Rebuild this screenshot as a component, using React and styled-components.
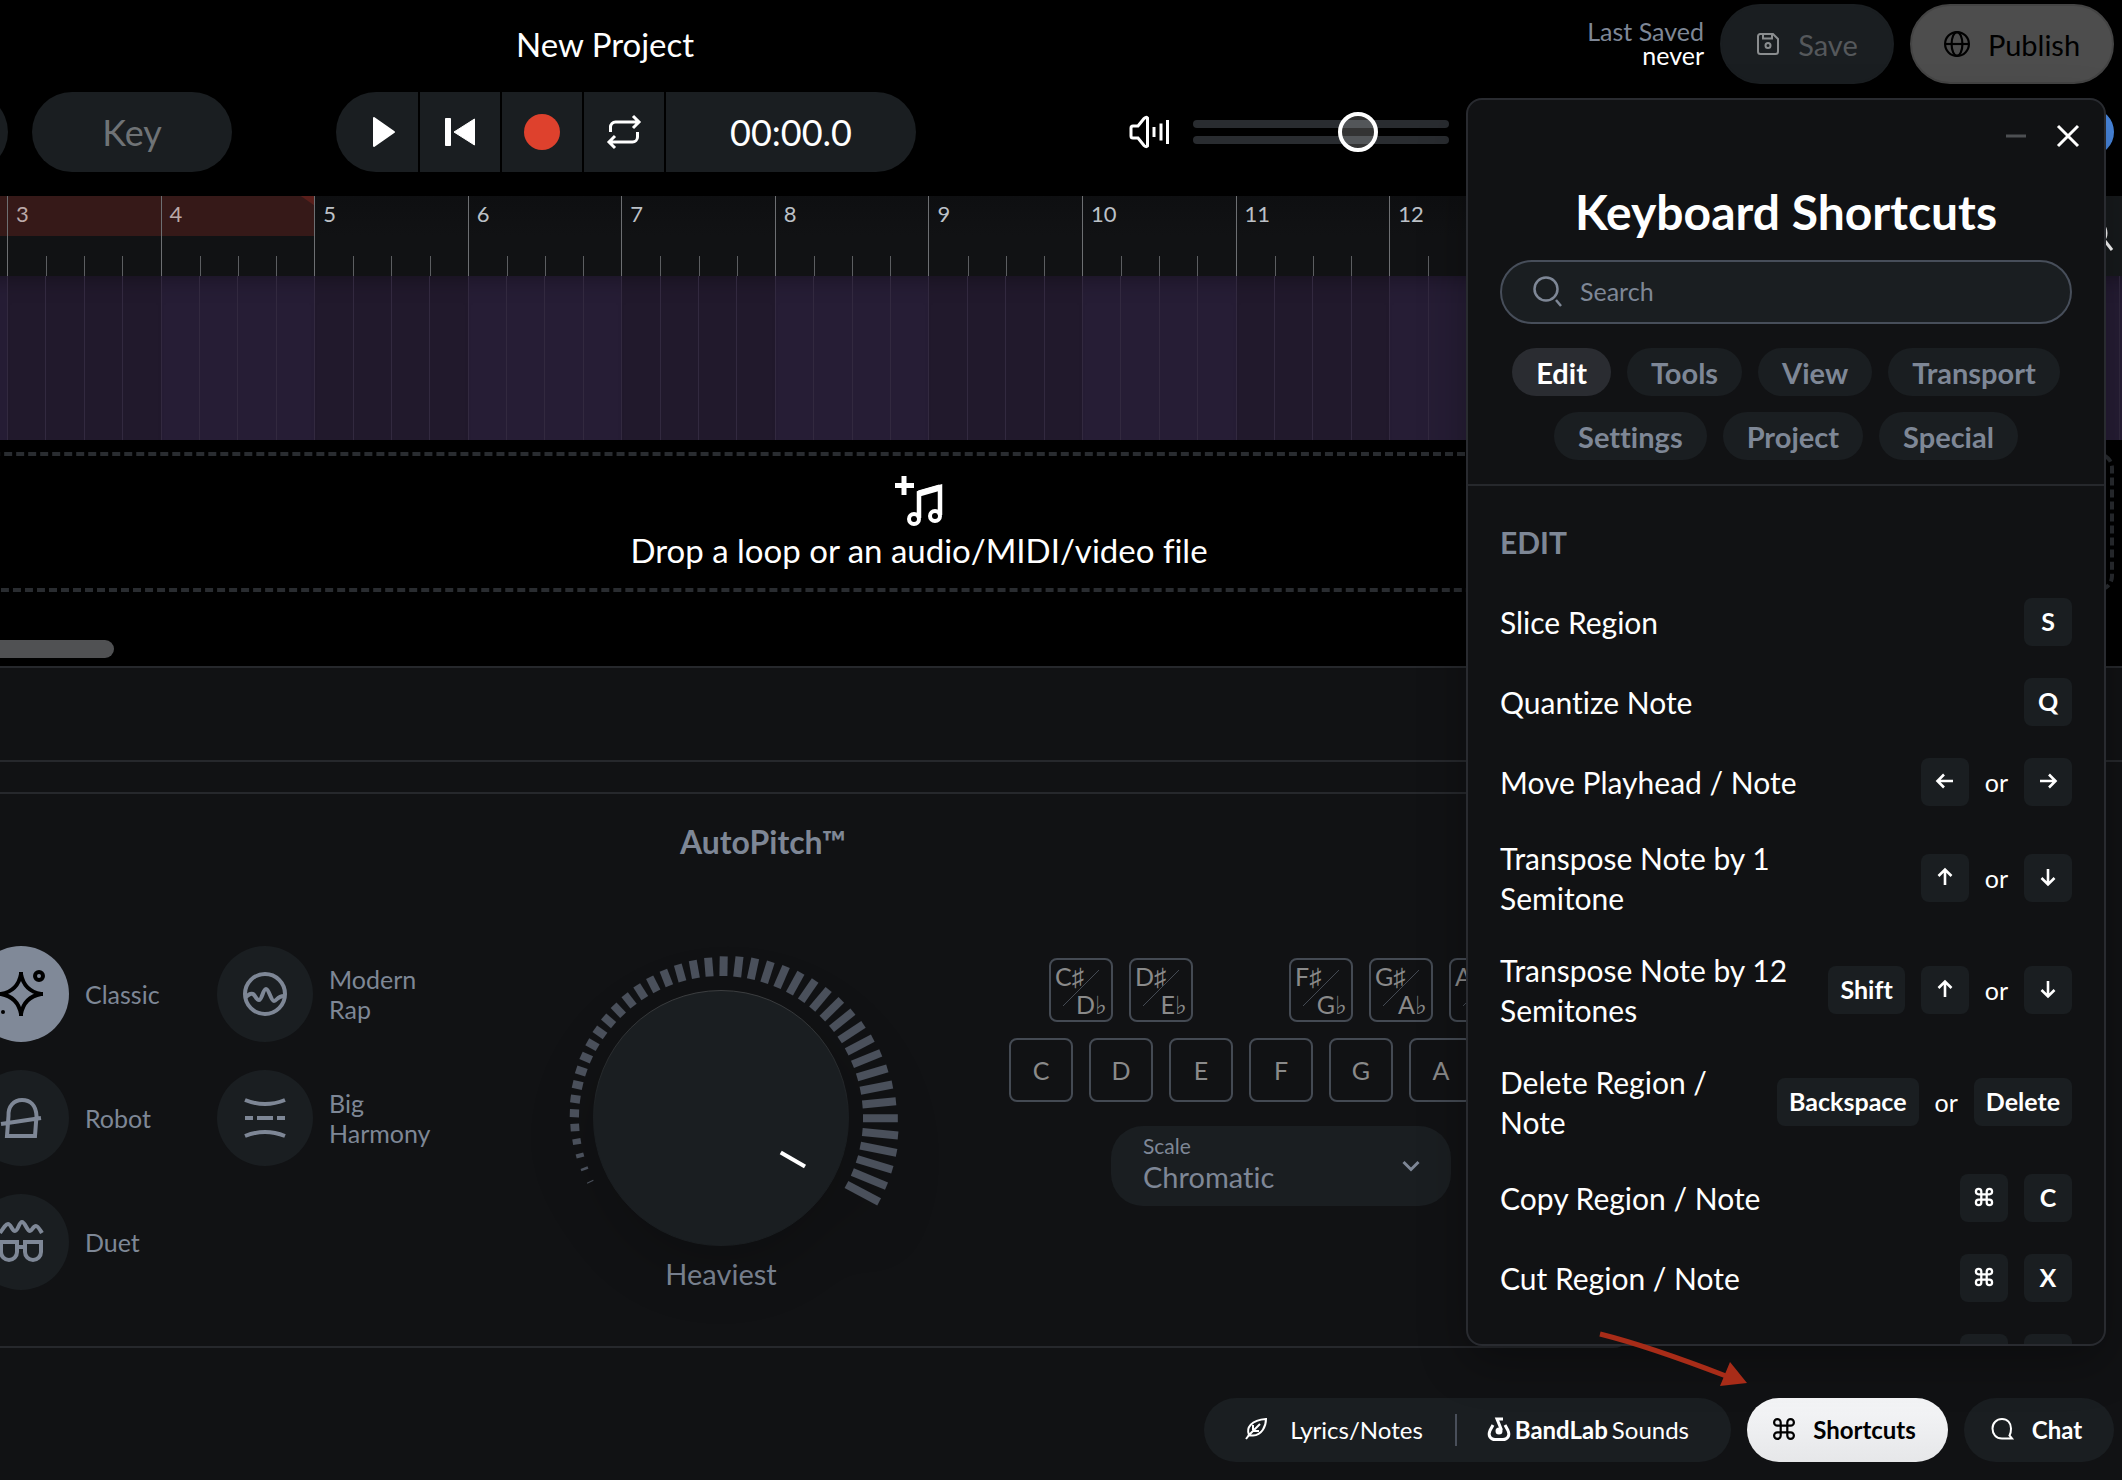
// src/App.jsx
import React, { useState } from 'react';
import styled, { createGlobalStyle } from 'styled-components';

// Global Styles

const GlobalStyle = createGlobalStyle`
  *, *::before, *::after {
    box-sizing: border-box;
  }

  body {
    margin: 0;
    background: #111214;
    color: #fff;
    font-family: Lato, 'Open Sans', sans-serif;
    font-size: 25px;
    font-variant-ligatures: none;
  }

  button, input, select {
    font-family: inherit;
    font-variant-ligatures: none;
    margin: 0;
  }
`;

const Page = styled.div`
  position: relative;
  display: flex;
  flex-direction: column;
  min-height: 100vh;
  overflow: hidden;
`;

// Header

const Header = styled.header`
  display: flex;
  flex-direction: column;
  gap: 8px;
  height: 196px;
  padding: 4px 8px 0 0;
  background: #000;
`;

const HeaderRow = styled.div`
  display: flex;
  align-items: center;
  height: 80px;
`;

const ProjectName = styled.h1`
  margin: 0 auto 0 516px;
  font-size: 33px;
  font-weight: 400;
`;

const SavedInfo = styled.div`
  margin-right: 16px;
  padding-bottom: 2px;
  font-size: 25px;
  line-height: 24px;
  text-align: right;
  color: #7e8796;

  strong {
    display: block;
    font-weight: 400;
    color: #fff;
  }
`;

const HeaderButton = styled.button`
  display: flex;
  align-items: center;
  justify-content: center;
  gap: 18px;
  width: ${({ $primary }) => ($primary ? '204px' : '174px')};
  height: 80px;
  margin-left: ${({ $primary }) => ($primary ? '16px' : '0')};
  border: 2px solid ${({ $primary }) => ($primary ? '#444' : '#1a1e21')};
  border-radius: 40px;
  background: ${({ $primary }) => ($primary ? '#4d4d4d' : '#1a1e21')};
  color: ${({ $primary }) => ($primary ? '#000' : '#55585b')};
  font-size: 29px;
`;

const TempoPill = styled.div`
  width: 80px;
  height: 80px;
  margin: 0 24px 0 -72px;
  border-radius: 40px;
  background: #1a1e21;
`;

const KeyButton = styled.button`
  width: 200px;
  height: 80px;
  margin-right: 104px;
  border: 0;
  border-radius: 40px;
  background: #1a1e21;
  color: #6f7376;
  font-size: 36px;
`;

const Transport = styled.div`
  display: flex;
  gap: 2px;
  height: 80px;
  border-radius: 40px;
  overflow: hidden;
`;

const TransportButton = styled.button`
  display: flex;
  align-items: center;
  justify-content: center;
  width: ${({ $first }) => ($first ? '82px' : '80px')};
  padding: ${({ $first }) => ($first ? '0 0 0 14px' : '0')};
  border: 0;
  background: #1a1e21;
  color: #fff;
`;

const Clock = styled.output`
  display: flex;
  align-items: center;
  justify-content: center;
  width: 250px;
  background: #1a1e21;
  font-size: 36px;
`;

const Volume = styled.label`
  display: flex;
  align-items: center;
  gap: 24px;
  margin-left: 213px;
`;

const Slider = styled.div`
  position: relative;
  display: flex;
  flex-direction: column;
  justify-content: center;
  gap: 8px;
  width: 256px;
  height: 40px;
`;

const SliderBar = styled.div`
  height: 8px;
  border-radius: 4px;
  background: #292c30;
`;

const SliderInput = styled.input`
  position: absolute;
  inset: 0;
  width: 100%;
  height: 40px;
  appearance: none;
  background: transparent;

  &::-webkit-slider-thumb {
    appearance: none;
    width: 40px;
    height: 40px;
    border: 4px solid #fff;
    border-radius: 50%;
    background: rgba(255, 255, 255, 0.2);
  }
`;

const Avatar = styled.div`
  width: 48px;
  height: 48px;
  margin-left: auto;
  border-radius: 50%;
  background: #4a8ae4;
`;

// Timeline

const Timeline = styled.section`
  position: relative;
  overflow: hidden;
`;

const Bars = styled.div`
  display: grid;
  grid-template-columns: 7px repeat(14, 1fr);
  height: ${({ $height }) => $height};
  margin-right: -35px;
`;

const RulerBar = styled.div`
  display: flex;
  flex-direction: column;
  border-left: ${({ $lead }) => ($lead ? '0' : '1px solid #6d6f72')};
  background: linear-gradient(#0e0f11, #111214 50%);
`;

const BarNumber = styled.div`
  height: 40px;
  padding: 5px 0 0 8px;
  font-size: 22px;
  line-height: 26px;
  color: ${({ $looped }) => ($looped ? '#bba9a8' : '#bcc1c7')};
  background: ${({ $looped, $end }) => {
    if ($end) return 'linear-gradient(215deg, #5a1f1b 7px, #361918 8px)';
    return $looped ? '#361918' : 'transparent';
  }};
`;

const Ticks = styled.div`
  display: grid;
  grid-template-columns: repeat(4, 1fr);
  height: 20px;
  margin-top: auto;

  span + span {
    border-left: 1px solid #5c5e61;
  }
`;

const TrackBar = styled.div`
  display: grid;
  grid-template-columns: repeat(4, 1fr);
  background: ${({ $even }) => ($even ? '#261d35' : '#21192c')};
  box-shadow: inset 0 24px 24px -24px rgba(0, 0, 0, 0.4);

  span {
    border-left: 1px solid #32293f;
  }
`;

const ZoomButton = styled.button`
  position: absolute;
  top: 0;
  right: 0;
  display: flex;
  align-items: center;
  justify-content: center;
  width: 64px;
  height: 80px;
  border: 0;
  background: #171a1c;
  color: #fff;
`;

const DropArea = styled.section`
  padding-top: 12px;
  background: #000;
`;

const DropZone = styled.div`
  display: flex;
  flex-direction: column;
  align-items: center;
  gap: 2px;
  height: 140px;
  margin: 0 8px 0 -276px;
  padding-top: 20px;
  border: 4px dashed #292c30;
  border-radius: 16px;
  font-size: 33px;
  line-height: 44px;
`;

const ScrollThumb = styled.div`
  width: 130px;
  height: 18px;
  margin: 48px 0 8px -16px;
  border-radius: 9px;
  background: #505153;
`;

// Effect editor

const EditorBar = styled.div`
  height: 96px;
  border-top: 2px solid #26282c;
  border-bottom: 2px solid #26282c;
`;

const Editor = styled.section`
  height: 556px;
  margin: 30px 492px 0 -104px;
  padding: 28px 75px 0;
  border: 2px solid #26282c;
  border-radius: 16px;
  color: #7e8796;
`;

const EditorTitle = styled.h2`
  margin: 0 0 84px;
  font-size: 32px;
  font-weight: 700;
  line-height: 40px;
  text-align: center;
`;

const EditorColumns = styled.div`
  display: flex;
  justify-content: space-between;
`;

const Effects = styled.div`
  display: grid;
  grid-template-columns: 244px 216px;
  row-gap: 28px;
  align-content: start;
`;

const EffectButton = styled.button`
  display: flex;
  align-items: center;
  gap: 16px;
  padding: 0;
  border: 0;
  background: none;
  color: #7e8796;
  font-size: 25px;
  line-height: 30px;
  text-align: left;
`;

const EffectIcon = styled.span`
  display: flex;
  flex-shrink: 0;
  align-items: center;
  justify-content: center;
  width: 96px;
  height: 96px;
  border-radius: 50%;
  background: ${({ $active }) => ($active ? '#808998' : '#1a1e21')};
  color: ${({ $active }) => ($active ? '#000' : '#7e8796')};
`;

const EffectName = styled.span`
  width: 104px;
`;

const KnobColumn = styled.div`
  display: flex;
  flex-direction: column;
  align-items: center;
  font-size: 29px;
  line-height: 36px;

  svg {
    filter: drop-shadow(0 32px 24px rgba(0, 0, 0, 0.15));
  }
`;

const Keys = styled.div`
  display: flex;
  flex-direction: column;
  align-items: center;
  gap: 16px;
  width: 544px;
  padding-top: 12px;
`;

const KeyRow = styled.div`
  display: grid;
  grid-template-columns: repeat(${({ $count }) => $count}, 64px);
  gap: 16px;
`;

const NoteKey = styled.button`
  position: relative;
  display: flex;
  flex-direction: column;
  align-items: center;
  justify-content: center;
  height: 64px;
  padding: 0 4px;
  border: 2px solid #444a53;
  border-radius: 8px;
  background: none;
  color: #8a8a8a;
  font-size: 25px;
  line-height: 28px;

  svg {
    position: absolute;
    inset: 0;
  }
`;

const Sharp = styled.span`
  align-self: flex-start;
`;

const Flat = styled.span`
  align-self: flex-end;
`;

const ScaleField = styled.label`
  display: flex;
  align-items: center;
  gap: 16px;
  width: 340px;
  height: 80px;
  margin-top: 8px;
  padding: 0 30px 4px 32px;
  border-radius: 32px;
  background: #1a1e21;
`;

const ScaleText = styled.span`
  display: flex;
  flex: 1;
  flex-direction: column;
  font-size: 21px;
  line-height: 24px;
`;

const ScaleSelect = styled.select`
  width: 100%;
  height: 36px;
  padding: 0;
  border: 0;
  appearance: none;
  background: transparent;
  color: #7e8796;
  font-size: 29px;
`;

// Footer

const Footer = styled.footer`
  position: relative;
  display: flex;
  align-items: center;
  justify-content: flex-end;
  gap: 16px;
  padding: 50px 8px 18px 0;
`;

const FooterGroup = styled.div`
  display: flex;
  align-items: center;
  height: 64px;
  padding: 0 42px 0 40px;
  border-radius: 32px;
  background: #1a1e21;
`;

const FooterLink = styled.button`
  display: flex;
  align-items: center;
  gap: ${({ $gap }) => $gap};
  padding: 0 0 2px;
  border: 0;
  background: none;
  color: #fff;
  font-size: 24px;
`;

const Divider = styled.span`
  width: 2px;
  height: 32px;
  margin: 0 30px 0 32px;
  background: #494f5a;
`;

const Brand = styled.span`
  display: flex;
  gap: 4px;
`;

const FooterButton = styled.button`
  display: flex;
  align-items: center;
  justify-content: center;
  gap: 18px;
  width: ${({ $light }) => ($light ? '201px' : '150px')};
  height: 64px;
  padding: 0 6px 2px 0;
  border: 0;
  border-radius: 32px;
  background: ${({ $light }) => ($light ? 'linear-gradient(#f5f6f8, #e6e7e9)' : '#1a1e21')};
  color: ${({ $light }) => ($light ? '#000' : '#fff')};
  font-size: 24px;
  font-weight: 700;
`;

const Pointer = styled.svg`
  position: absolute;
  z-index: 3;
  right: 374px;
  bottom: 92px;
  pointer-events: none;
`;

// Shortcuts dialog

const Dialog = styled.aside`
  position: absolute;
  z-index: 2;
  top: 98px;
  right: 16px;
  bottom: 134px;
  display: flex;
  flex-direction: column;
  width: 640px;
  border: 2px solid #292b30;
  border-radius: 16px;
  background: #111214;
  box-shadow: 0 16px 48px rgba(0, 0, 0, 0.3);
  overflow: hidden;
`;

const DialogHead = styled.div`
  display: flex;
  flex-direction: column;
  padding: 0 32px 24px;
  border-bottom: 2px solid #26282c;
`;

const DialogControls = styled.div`
  display: flex;
  justify-content: flex-end;
  gap: 16px;
  margin-right: -14px;
  padding-top: 18px;
`;

const IconButton = styled.button`
  display: flex;
  align-items: center;
  justify-content: center;
  width: 36px;
  height: 36px;
  padding: 0;
  border: 0;
  background: none;
  color: ${({ $muted }) => ($muted ? '#4d4f52' : '#fff')};
`;

const DialogTitle = styled.h2`
  margin: 27px 0 17px;
  font-size: 48px;
  font-weight: 700;
  line-height: 62px;
  text-align: center;
`;

const SearchBox = styled.label`
  display: flex;
  align-items: center;
  gap: 16px;
  height: 64px;
  padding: 0 30px;
  border: 2px solid #474e5a;
  border-radius: 32px;
  background: #1a1e21;
  color: #7e8796;
`;

const SearchInput = styled.input`
  flex: 1;
  padding: 0 0 2px;
  border: 0;
  outline: 0;
  background: transparent;
  color: #fff;
  font-size: 25px;

  &::placeholder {
    color: #7e8796;
  }
`;

const Filters = styled.div`
  display: flex;
  flex-wrap: wrap;
  justify-content: center;
  gap: 16px;
  margin-top: 24px;
`;

const Filter = styled.button`
  height: 48px;
  padding: 0 24px;
  border: 0;
  border-radius: 24px;
  background: ${({ $active }) => ($active ? '#2a2c31' : '#1a1e21')};
  color: ${({ $active }) => ($active ? '#fff' : '#7e8796')};
  font-size: 29px;
  font-weight: 700;
`;

const DialogBody = styled.div`
  flex: 1;
  min-height: 0;
  padding: 34px 32px 0;
  overflow-y: auto;
  scrollbar-width: none;
`;

const GroupTitle = styled.h3`
  margin: 0 0 18px;
  font-size: 30px;
  font-weight: 700;
  line-height: 44px;
  color: #7e8796;
`;

const ShortcutList = styled.ul`
  margin: 0;
  padding: 0;
  list-style: none;
`;

const Shortcut = styled.li`
  display: flex;
  align-items: center;
  justify-content: space-between;
  gap: 16px;
  padding: 16px 0;
`;

const ShortcutName = styled.span`
  max-width: 320px;
  font-size: 30px;
  line-height: 40px;
`;

const Combo = styled.span`
  display: flex;
  flex-shrink: 0;
  align-items: center;
  gap: 16px;
`;

const Kbd = styled.kbd`
  display: flex;
  align-items: center;
  justify-content: center;
  min-width: 48px;
  height: 48px;
  padding: 0 12px 2px;
  border-radius: 8px;
  background: #1a1e21;
  font-family: inherit;
  font-size: 25px;
  font-weight: 700;
`;

// Icons

const Icon = ({ size = 24, width = 2, box = 24, children }) => (
  <svg
    width={size}
    height={size}
    viewBox={`0 0 ${box} ${box}`}
    fill="none"
    stroke="currentColor"
    strokeWidth={width}
    overflow="visible"
    aria-hidden="true"
  >
    {children}
  </svg>
);

const CommandIcon = ({ size = 22, width = 2 }) => (
  <Icon size={size} width={width} box={20}>
    <path d="M7 7V4a3 3 0 1 0-3 3h12a3 3 0 1 0-3-3v12a3 3 0 1 0 3-3H4a3 3 0 1 0 3 3V7z" />
  </Icon>
);

const ARROWS = {
  left: 'M18 10H3M9 3.5L2.5 10L9 16.5',
  right: 'M2 10H17M11 3.5L17.5 10L11 16.5',
  up: 'M10 18V3M3.5 9L10 2.5L16.5 9',
  down: 'M10 2V17M3.5 11L10 17.5L16.5 11',
};

const ArrowIcon = ({ to }) => (
  <Icon size={20} width={2.6} box={20}>
    <path d={ARROWS[to]} />
  </Icon>
);

const EFFECT_ICONS = {
  Classic: (
    <>
      <path d="M24 4C26 15 33 22 44 24C33 26 26 33 24 44C22 33 15 26 4 24C15 22 22 15 24 4Z" />
      <path d="M24 2V8M24 40V46M2 24H8M40 24H46" />
      <circle cx="42" cy="6" r="4" />
      <circle cx="6" cy="42" r="2" fill="currentColor" stroke="none" />
    </>
  ),
  'Modern Rap': (
    <>
      <circle cx="24" cy="24" r="20" />
      <path d="M4 28C7 25 9 23 12 24C15 26 15 30 18 30C21 30 22 19 25 19C28 19 30 31 33 31C36 31 36 26 43 26" />
    </>
  ),
  Robot: <path d="M10 42H38L39.5 22C39 11 33 6 25 6C17 6 11 12 11.5 22L10 42ZM4 30L44 24" />,
  'Big Harmony': (
    <>
      <path d="M4 6Q24 14 44 6M4 42Q24 34 44 42" />
      <path d="M4 24H12M16 24H32M36 24H44" />
    </>
  ),
  Duet: (
    <>
      <path d="M3 15C7 9 9 6 11 6C14 6 15 13 18 13C21 13 22 4 25 4C28 4 30 13 33 13C35 13 36 8 39 8C41 8 43 12 45 15" />
      <path d="M4 24H20V34A8 8 0 0 1 4 34ZM28 24H44V34A8 8 0 0 1 28 34ZM20 29H28" />
    </>
  ),
};

// Data

const EFFECTS = ['Classic', 'Modern Rap', 'Robot', 'Big Harmony', 'Duet'];

const SHARPS = [['C♯', 'D♭'], ['D♯', 'E♭'], null, ['F♯', 'G♭'], ['G♯', 'A♭'], ['A♯', 'B♭']];

const NATURALS = ['C', 'D', 'E', 'F', 'G', 'A', 'B'];

const FILTERS = ['Edit', 'Tools', 'View', 'Transport', 'Settings', 'Project', 'Special'];

const SHORTCUTS = [
  { name: 'Slice Region', keys: ['S'] },
  { name: 'Quantize Note', keys: ['Q'] },
  { name: 'Move Playhead / Note', keys: ['left', 'or', 'right'] },
  { name: 'Transpose Note by 1 Semitone', keys: ['up', 'or', 'down'] },
  { name: 'Transpose Note by 12 Semitones', keys: ['Shift', 'up', 'or', 'down'] },
  { name: 'Delete Region / Note', keys: ['Backspace', 'or', 'Delete'] },
  { name: 'Copy Region / Note', keys: ['cmd', 'C'] },
  { name: 'Cut Region / Note', keys: ['cmd', 'X'] },
  { name: 'Paste Region / Note', keys: ['cmd', 'V'] },
];

const BAR_NUMBERS = Array.from({ length: 14 }, (_, i) => i + 3);

const Knob = () => {
  const ticks = Array.from({ length: 43 }, (_, i) => ({
    angle: -116 + i * 5.57,
    length: Math.min(37, 7 + 0.4 * i + 0.0095 * i * i),
    width: Math.min(8, 1 + 1.6 * i),
  }));

  return (
    <svg width="360" height="310" viewBox="-180 -172 360 310" overflow="visible" role="img" aria-label="AutoPitch amount">
      <defs>
        <linearGradient id="knobRim" x1="0" y1="0" x2="0" y2="1">
          <stop offset="0" stopColor="#3c3e40" />
          <stop offset="0.5" stopColor="#1a1e21" />
        </linearGradient>
      </defs>
      {ticks.map((tick) => (
        <rect
          key={tick.angle}
          x={-tick.width / 2}
          y={-142 - tick.length}
          width={tick.width}
          height={tick.length}
          fill="#4a505b"
          transform={`rotate(${tick.angle})`}
        />
      ))}
      <circle r="127.5" fill="#1a1e21" stroke="url(#knobRim)" />
      <rect x="-2" y="-97" width="4" height="28" fill="#fff" transform="rotate(120)" />
    </svg>
  );
};

const ShortcutKey = ({ value }) => {
  if (value === 'or') return <span>or</span>;
  if (value === 'cmd') return <Kbd aria-label="Command"><CommandIcon size={18} width={2.5} /></Kbd>;
  if (ARROWS[value]) return <Kbd aria-label={value}><ArrowIcon to={value} /></Kbd>;
  return <Kbd>{value}</Kbd>;
};

const ShortcutsDialog = () => {
  const [filter, setFilter] = useState('Edit');

  return (
    <Dialog aria-label="Keyboard Shortcuts">
      <DialogHead>
        <DialogControls>
          <IconButton $muted aria-label="Minimize">
            <Icon size={20} width={3} box={20}><path d="M0 10H20" /></Icon>
          </IconButton>
          <IconButton aria-label="Close">
            <Icon size={20} width={3} box={20}><path d="M0 0L20 20M20 0L0 20" /></Icon>
          </IconButton>
        </DialogControls>
        <DialogTitle>Keyboard Shortcuts</DialogTitle>
        <SearchBox>
          <Icon size={32} width={2.5} box={32}>
            <circle cx="14" cy="13" r="11.5" />
            <path d="M24 24L29 30" />
          </Icon>
          <SearchInput type="text" placeholder="Search" aria-label="Search" />
        </SearchBox>
        <Filters>
          {FILTERS.map((name) => (
            <Filter key={name} $active={name === filter} onClick={() => setFilter(name)}>{name}</Filter>
          ))}
        </Filters>
      </DialogHead>
      <DialogBody>
        <GroupTitle>EDIT</GroupTitle>
        <ShortcutList>
          {SHORTCUTS.map(({ name, keys }) => (
            <Shortcut key={name}>
              <ShortcutName>{name}</ShortcutName>
              <Combo>
                {keys.map((value) => <ShortcutKey key={value} value={value} />)}
              </Combo>
            </Shortcut>
          ))}
        </ShortcutList>
      </DialogBody>
    </Dialog>
  );
};

const App = () => {
  return (
    <Page>
      <GlobalStyle />

      {/* Header */}
      <Header>
        <HeaderRow>
          <ProjectName>New Project</ProjectName>
          <SavedInfo>Last Saved <strong>never</strong></SavedInfo>
          <HeaderButton disabled>
            <Icon size={24}>
              <path d="M4 2H17L22 7V19.5A2.5 2.5 0 0 1 19.5 22H4.5A2.5 2.5 0 0 1 2 19.5V4.5A2.5 2.5 0 0 1 4 2Z" stroke="#8a8d8f" />
              <path d="M7 2V6.5H16V2" stroke="#8a8d8f" />
              <circle cx="12" cy="13.5" r="2.5" stroke="#8a8d8f" />
            </Icon>
            Save
          </HeaderButton>
          <HeaderButton $primary>
            <Icon size={26}>
              <circle cx="12" cy="12" r="11" />
              <ellipse cx="12" cy="12" rx="5" ry="11" />
              <path d="M1 12H23" />
            </Icon>
            Publish
          </HeaderButton>
        </HeaderRow>
        <HeaderRow>
          <TempoPill />
          <KeyButton>Key</KeyButton>
          <Transport>
            <TransportButton $first aria-label="Play">
              <Icon size={30} box={30}>
                <path d="M5 1L25 15L5 29Z" fill="currentColor" strokeLinejoin="round" />
              </Icon>
            </TransportButton>
            <TransportButton aria-label="Rewind">
              <Icon size={30} width={1} box={30}>
                <path d="M0.5 1.5H5.5V28.5H0.5ZM29.5 2V28L9 15Z" fill="currentColor" strokeLinejoin="round" />
              </Icon>
            </TransportButton>
            <TransportButton aria-label="Record">
              <Icon size={36} width={0} box={36}><circle cx="18" cy="18" r="18" fill="#de412d" /></Icon>
            </TransportButton>
            <TransportButton aria-label="Loop">
              <Icon size={34} width={3} box={34}>
                <path d="M3.5 17V12A5 5 0 0 1 8.5 7H32M26 1L32 7L26 13" />
                <path d="M30.5 17V22A5 5 0 0 1 25.5 27H2M8 21L2 27L8 33" />
              </Icon>
            </TransportButton>
            <Clock>00:00.0</Clock>
          </Transport>
          <Volume>
            <Icon size={40} width={3} box={40}>
              <path d="M2 16Q2 14 4 14H9L15 6.5Q17 4.5 18.5 6V34Q17 35.5 15 33.5L9 26H4Q2 26 2 24Z" />
              <path d="M25 15V25M32 11.5V28.5M38.5 8V32" />
            </Icon>
            <Slider>
              <SliderBar />
              <SliderBar />
              <SliderInput type="range" min="0" max="100" defaultValue="67" aria-label="Volume" />
            </Slider>
          </Volume>
          <Avatar />
        </HeaderRow>
      </Header>

      {/* Timeline */}
      <Timeline>
        <Bars $height="80px">
          <RulerBar $lead><BarNumber $looped /></RulerBar>
          {BAR_NUMBERS.map((bar) => (
            <RulerBar key={bar}>
              <BarNumber $looped={bar < 5} $end={bar === 4}>{bar}</BarNumber>
              <Ticks><span /><span /><span /><span /></Ticks>
            </RulerBar>
          ))}
        </Bars>
        <Bars $height="164px">
          <TrackBar $even />
          {BAR_NUMBERS.map((bar) => (
            <TrackBar key={bar} $even={bar % 2 === 0}><span /><span /><span /><span /></TrackBar>
          ))}
        </Bars>
        <ZoomButton aria-label="Zoom">
          <Icon size={40} width={3} box={40}>
            <circle cx="24" cy="17" r="12" />
            <path d="M35 25L42 34" />
          </Icon>
        </ZoomButton>
      </Timeline>

      <DropArea>
        <DropZone>
          <Icon size={50} width={4} box={50}>
            <path d="M10 0V19M1 9.5H20" strokeWidth="5" />
            <path d="M25 42V17L46 11V39" strokeWidth="4.5" />
            <path d="M25 17.5L46 11.5" strokeWidth="6" />
            <circle cx="20" cy="43" r="5" />
            <circle cx="41" cy="40" r="5" />
          </Icon>
          Drop a loop or an audio/MIDI/video file
        </DropZone>
        <ScrollThumb />
      </DropArea>

      {/* AutoPitch */}
      <EditorBar />
      <Editor>
        <EditorTitle>AutoPitch™</EditorTitle>
        <EditorColumns>
          <Effects>
            {EFFECTS.map((name) => (
              <EffectButton key={name}>
                <EffectIcon $active={name === 'Classic'}>
                  <Icon size={48} width={4} box={48}>{EFFECT_ICONS[name]}</Icon>
                </EffectIcon>
                <EffectName>{name}</EffectName>
              </EffectButton>
            ))}
          </Effects>
          <KnobColumn>
            <Knob />
            <span>Heaviest</span>
          </KnobColumn>
          <Keys>
            <KeyRow $count={6}>
              {SHARPS.map((pair) => (pair ? (
                <NoteKey key={pair[0]}>
                  <Sharp>{pair[0]}</Sharp>
                  <Flat>{pair[1]}</Flat>
                  <svg width="60" height="60" aria-hidden="true">
                    <path d="M12 46L48 10" stroke="#444a53" />
                  </svg>
                </NoteKey>
              ) : <span key="gap" />))}
            </KeyRow>
            <KeyRow $count={7}>
              {NATURALS.map((note) => <NoteKey key={note}>{note}</NoteKey>)}
            </KeyRow>
            <ScaleField>
              <ScaleText>
                Scale
                <ScaleSelect defaultValue="Chromatic">
                  <option>Chromatic</option>
                  <option>Major</option>
                  <option>Minor</option>
                </ScaleSelect>
              </ScaleText>
              <Icon size={20} width={3} box={20}><path d="M2.5 8L10 15.5L17.5 8" /></Icon>
            </ScaleField>
          </Keys>
        </EditorColumns>
      </Editor>

      {/* Footer */}
      <Footer>
        <FooterGroup>
          <FooterLink $gap="22px">
            <Icon size={24}>
              <path d="M2 22L5 18C2 11 7 3 22 2C22 9 18 18 9 18.5H5M4 19L16 7M9 13V8M9 14H15" />
            </Icon>
            Lyrics/Notes
          </FooterLink>
          <Divider />
          <FooterLink $gap="4px">
            <Icon size={24} width={3}>
              <path d="M6 8L3 13.5C0.5 19 4 22.5 8 22.5H16C20 22.5 23.5 19 21 13.5L18 8" />
              <path d="M16 2H10L14.5 13" />
              <circle cx="12" cy="14" r="2" fill="currentColor" />
            </Icon>
            <Brand><b>BandLab</b> <span>Sounds</span></Brand>
          </FooterLink>
        </FooterGroup>
        <FooterButton $light>
          <CommandIcon />
          Shortcuts
        </FooterButton>
        <FooterButton>
          <Icon size={24}>
            <path d="M22 21.5H12C6 21.5 2.5 17 2.5 11.5C2.5 6 6.5 2 12 2C17.5 2 21 6 21 11.5C21 15 20.5 17 19.5 18.5Z" />
          </Icon>
          Chat
        </FooterButton>
        <Pointer width="150" height="58" viewBox="0 0 150 58" aria-hidden="true">
          <path d="M2 4Q50 16 128 46" fill="none" stroke="#a82c18" strokeWidth="5" />
          <path d="M132 32L149 53L122 56Z" fill="#a82c18" />
        </Pointer>
      </Footer>

      <ShortcutsDialog />
    </Page>
  );
};

export default App;
